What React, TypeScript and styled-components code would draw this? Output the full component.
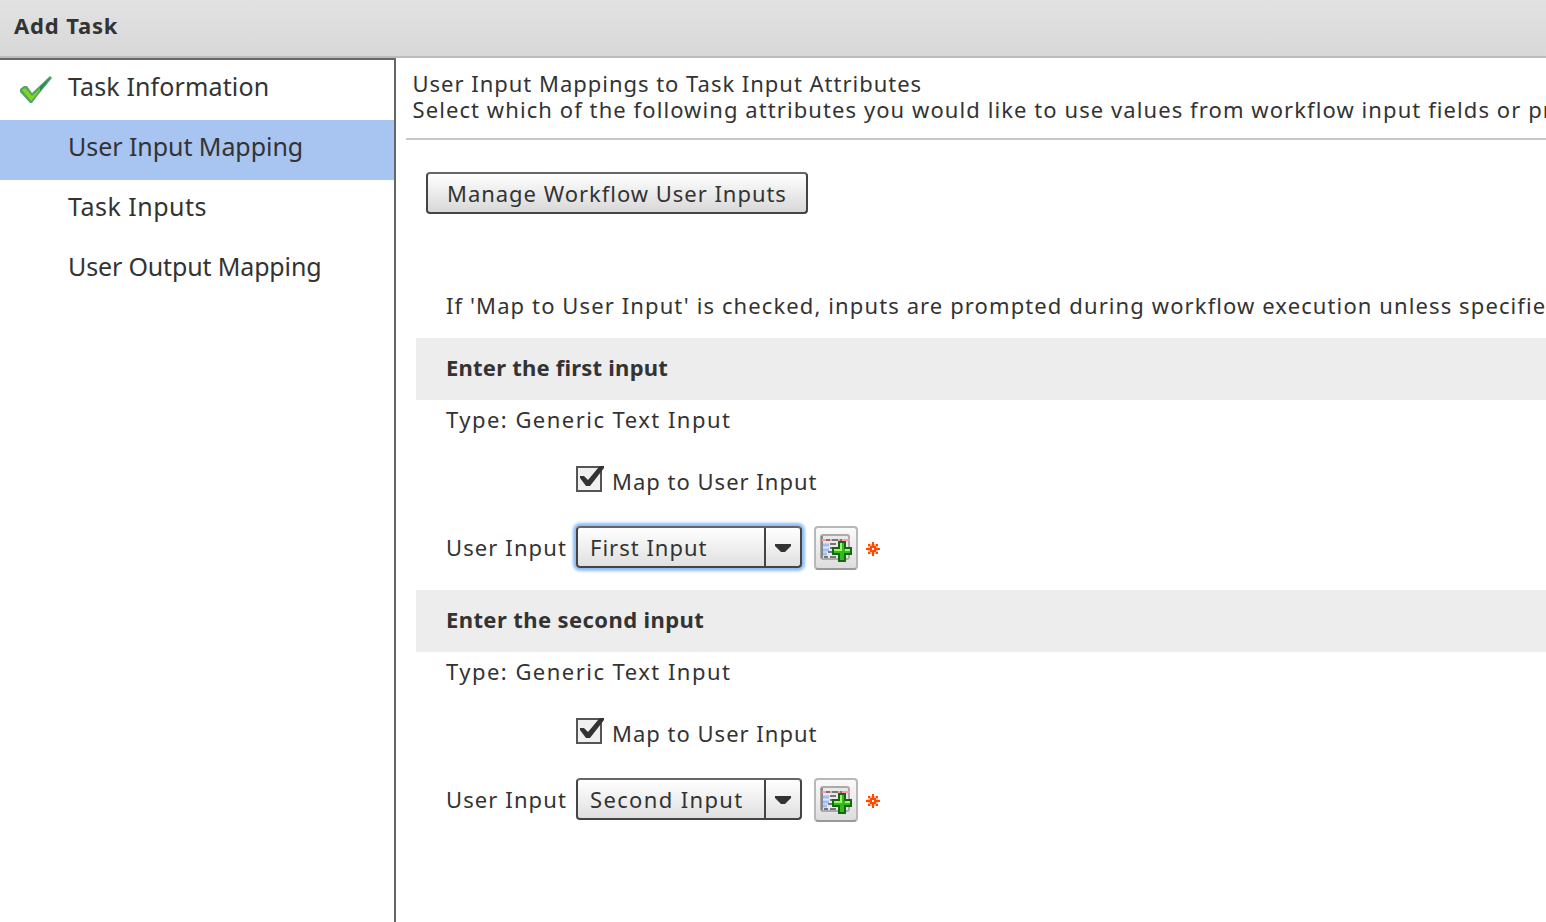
import React from "react";
import styled, { createGlobalStyle } from "styled-components";

const GlobalStyle = createGlobalStyle`
  * { box-sizing: border-box; }
  body {
    margin: 0;
    background: #fff;
    color: #333;
    font-family: "Noto Sans", "Open Sans", sans-serif;
    overflow: hidden;
  }
`;

const Window = styled.div`
  width: 100%;
  height: 922px;
  display: flex;
  flex-direction: column;
  overflow: hidden;
`;

const TitleBar = styled.header`
  flex: none;
  height: 58px;
  padding: 9px 14px 0;
  background: linear-gradient(#e2e2e2, #d8d8d8);
  border-bottom: 2px solid #bbb;
`;

const Title = styled.h1<{ $track: number }>`
  margin: 0;
  font-size: 22px;
  line-height: 32px;
  font-weight: 700;
  letter-spacing: ${(p) => p.$track}px;
`;

const Body = styled.div`
  flex: 1;
  min-height: 0;
  display: flex;
`;

const Steps = styled.nav`
  flex: none;
  width: 396px;
  border-top: 2px solid #666;
  border-right: 2px solid #666;
`;

const Step = styled.div<{ $active?: boolean }>`
  height: 60px;
  display: flex;
  padding: 7px 0 0 20px;
  background: ${(p) => (p.$active ? "#a8c4f0" : "transparent")};
`;

const StepMark = styled.span`
  width: 48px;
  padding-top: 9px;
  line-height: 0;
`;

const Text = styled.span<{ $track?: number }>`
  letter-spacing: ${(p) => p.$track ?? 1}px;
  white-space: nowrap;
`;

const StepLabel = styled(Text)`
  font-size: 25px;
  line-height: 38px;
`;

const Main = styled.main`
  flex: 1;
  min-width: 0;
  overflow: hidden;
  font-size: 22px;
`;

const Intro = styled.div`
  height: 82px;
  margin-left: 10px;
  padding: 12px 0 0 6.5px;
  display: flex;
  flex-direction: column;
  line-height: 26px;
  border-bottom: 2px solid #c8c8c8;
`;

const ManageButton = styled.button`
  display: flex;
  align-items: center;
  width: 382px;
  height: 42px;
  margin: 32px 0 0 30px;
  padding: 0 0 1px 19px;
  font: inherit;
  color: #333;
  background: linear-gradient(#fff, #d8d8d8);
  border: 2px solid #444;
  border-top-color: #666;
  border-radius: 4px;
`;

const Note = styled.p`
  margin: 75px 0 0 50px;
  height: 49px;
  line-height: 32px;
`;

const Section = styled.section`
  height: 252px;
  margin-left: 20px;
`;

const SectionTitle = styled.h2<{ $track: number }>`
  margin: 0;
  height: 62px;
  padding-left: 30px;
  font-size: 22px;
  line-height: 58px;
  background: #ededed;
  letter-spacing: ${(p) => p.$track}px;
`;

const TypeLine = styled.div`
  padding-left: 30px;
  height: 62px;
  line-height: 38px;
`;

const CheckLine = styled.label`
  display: flex;
  height: 60px;
  padding-left: 160px;
  gap: 8px;
  line-height: 38px;
`;

const CheckGlyph = styled.svg`
  flex: none;
  margin-top: 2px;
`;

const FieldLine = styled.div`
  display: flex;
  align-items: flex-start;
  padding: 4px 0 0 30px;
  line-height: 42px;
`;

const FieldLabel = styled(Text)`
  width: 130px;
`;

const Select = styled.div<{ $focused?: boolean }>`
  width: 226px;
  height: 42px;
  display: flex;
  line-height: 38px;
  background: linear-gradient(#fff, #e0e0e0);
  border: 2px solid #444;
  border-top-color: #666;
  border-radius: 4px;
  box-shadow: ${(p) => (p.$focused ? "0 0 3px 3px #8fbcf3" : "none")};
`;

const SelectValue = styled(Text)`
  width: 188px;
  padding-left: 12px;
  border-right: 2px solid #444;
`;

const SelectArrow = styled.span`
  flex: 1;
  display: flex;
  align-items: center;
  justify-content: center;
  padding-top: 2px;
`;

const IconButton = styled.button`
  display: flex;
  align-items: center;
  justify-content: center;
  width: 44px;
  height: 44px;
  margin: 0 8px 0 12px;
  padding: 0;
  background: linear-gradient(#fafafa, #ddd);
  border: 2px solid #b8b8b8;
  border-bottom-color: #999;
  border-radius: 4px;
`;

const Required = styled.svg`
  margin-top: 16px;
`;

const DoneIcon = () => (
  <svg width="34" height="30" viewBox="0 0 34 30">
    <path d="M0 13L4 10H7L12 17L30 0L32 2L18 19L12 27H10L0 16Z" fill="#4fa56b" />
    <path d="M2 14L5 12L7 14L12 20L22 11L16 19L11 25L8 21Z" fill="#85d51c" />
    <path d="M20 11L31 1L20 15Z" fill="#27865a" />
  </svg>
);

const Checkbox = () => (
  <CheckGlyph width="28" height="30" viewBox="0 0 28 30">
    <rect x="1" y="3" width="24" height="24" fill="#f0f0f0" stroke="#555" strokeWidth="2" />
    <path d="M4 12H8L12 16L22 4L24 2H28V4L14 22H10L4 14Z" fill="#333" />
  </CheckGlyph>
);

const AddFieldIcon = () => (
  <svg width="32" height="28" viewBox="0 0 32 28">
    <rect x="1" y="1" width="28" height="24" rx="2" fill="#e8e8ea" stroke="#aaa" strokeWidth="2" />
    <path d="M2 2V24" stroke="#888" strokeWidth="2" />
    <path d="M2 6H30" stroke="#ff9c9c" strokeWidth="2" />
    <path d="M6 6H10M12 6H18M20 6H22" stroke="#777" strokeWidth="2" />
    <path d="M3 11H9M3 16H9M3 20H7" stroke="#9dbcff" strokeWidth="3" />
    <path d="M10 10H16M18 10H20M10 14H14M8 18H12M4 23H8M10 23H16" stroke="#777" strokeWidth="2" />
    <path d="M19 8H25V14H31V20H25V27H19V20H13V14H19Z" fill="#2fbd1c" stroke="#176515" strokeWidth="2" />
    <path d="M21 9V16H14M25 16H30" fill="none" stroke="#a4f46a" strokeWidth="2" />
  </svg>
);

const RequiredMark = () => (
  <Required width="14" height="14" viewBox="0 0 7 7" shapeRendering="crispEdges">
    <path
      d="M3 0h1v1h-1zM1 1h1v1h-1zM3 1h1v1h-1zM5 1h1v1h-1zM2 2h3v1h-3zM0 3h3v1h-3zM4 3h3v1h-3zM2 4h3v1h-3zM1 5h1v1h-1zM3 5h1v1h-1zM5 5h1v1h-1zM3 6h1v1h-1z"
      fill="#ff4800"
    />
    <path d="M2 1h1v1h-1zM4 1h1v1h-1zM1 2h1v1h-1zM5 2h1v1h-1zM1 4h1v1h-1zM5 4h1v1h-1zM2 5h1v1h-1zM4 5h1v1h-1z" fill="#ffb890" />
  </Required>
);

const steps = [
  { label: "Task Information", done: true, track: 0.13 },
  { label: "User Input Mapping", active: true, track: -0.06 },
  { label: "Task Inputs", track: 0.5 },
  { label: "User Output Mapping", track: -0.15 },
];

const inputs = [
  { title: "Enter the first input", value: "First Input", focused: true, titleTrack: 0.22, valueTrack: 1 },
  { title: "Enter the second input", value: "Second Input", focused: false, titleTrack: 0.4, valueTrack: 1.35 },
];

export default function App() {
  return (
    <Window>
      <GlobalStyle />
      <TitleBar>
        <Title $track={0.85}>Add Task</Title>
      </TitleBar>
      <Body>
        <Steps>
          {steps.map((s) => (
            <Step key={s.label} $active={s.active}>
              <StepMark>{s.done && <DoneIcon />}</StepMark>
              <StepLabel $track={s.track}>{s.label}</StepLabel>
            </Step>
          ))}
        </Steps>
        <Main>
          <Intro>
            <Text $track={0.98}>User Input Mappings to Task Input Attributes</Text>
            <Text $track={1.08}>
              Select which of the following attributes you would like to use values from workflow input fields or pr
            </Text>
          </Intro>
          <ManageButton>
            <Text $track={0.97}>Manage Workflow User Inputs</Text>
          </ManageButton>
          <Note>
            <Text $track={1.105}>
              If 'Map to User Input' is checked, inputs are prompted during workflow execution unless specifie
            </Text>
          </Note>
          {inputs.map((i) => (
            <Section key={i.title}>
              <SectionTitle $track={i.titleTrack}>{i.title}</SectionTitle>
              <TypeLine>
                <Text $track={1.47}>Type: Generic Text Input</Text>
              </TypeLine>
              <CheckLine>
                <Checkbox />
                <Text $track={1}>Map to User Input</Text>
              </CheckLine>
              <FieldLine>
                <FieldLabel $track={1.1}>User Input</FieldLabel>
                <Select $focused={i.focused}>
                  <SelectValue $track={i.valueTrack}>{i.value}</SelectValue>
                  <SelectArrow>
                    <svg width="16" height="8" viewBox="0 0 16 8">
                      <path d="M0 0H16V2L10 8H6L0 2Z" fill="#333" />
                    </svg>
                  </SelectArrow>
                </Select>
                <IconButton aria-label="Add user input">
                  <AddFieldIcon />
                </IconButton>
                <RequiredMark />
              </FieldLine>
            </Section>
          ))}
        </Main>
      </Body>
    </Window>
  );
}
